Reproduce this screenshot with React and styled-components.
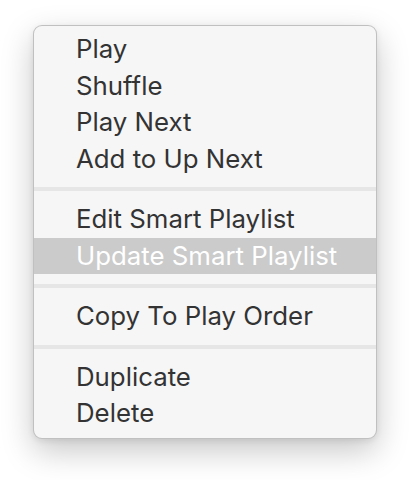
import React from 'react'
import styled, { createGlobalStyle } from 'styled-components'

const GlobalStyle = createGlobalStyle`
    html, body {
        margin: 0;
        padding: 0;
        background: #ffffff;
    }
    body {
        font-family: Inter, "Helvetica Neue", "Liberation Sans", Arial, sans-serif;
        -webkit-font-smoothing: antialiased;
    }
`

const Page = styled.div`
    width: 410px;
    height: 480px;
    padding: 25px 0 0 33px;
    box-sizing: border-box;
`

const Menu = styled.ul`
    list-style: none;
    margin: 0;
    width: 344px;
    box-sizing: border-box;
    padding: 5px 0 6px;
    background: #f6f6f6;
    border: 1px solid rgba(0, 0, 0, 0.22);
    border-radius: 9px;
    box-shadow: 0 12px 32px rgba(0, 0, 0, 0.22), 0 2px 6px rgba(0, 0, 0, 0.08);
`

const Item = styled.li`
    height: 36.5px;
    line-height: 35px;
    padding-left: 42px;
    font-size: 25.8px;
    color: ${(p) => (p.active ? '#ffffff' : '#333333')};
    background: ${(p) => (p.active ? '#cbcbcb' : 'transparent')};
    white-space: nowrap;
    cursor: default;
`

const Separator = styled.li`
    height: 4px;
    margin: 10px 0;
    background: #e6e6e6;
`

const groups = [
    ['Play', 'Shuffle', 'Play Next', 'Add to Up Next'],
    ['Edit Smart Playlist', 'Update Smart Playlist'],
    ['Copy To Play Order'],
    ['Duplicate', 'Delete'],
]

const App = () => {
    const active = 'Update Smart Playlist'
    return (
        <>
            <GlobalStyle />
            <Page>
                <Menu>
                    {groups.map((group, i) => (
                        <React.Fragment key={i}>
                            {i > 0 && <Separator />}
                            {group.map((label) => (
                                <Item key={label} active={label === active}>
                                    {label}
                                </Item>
                            ))}
                        </React.Fragment>
                    ))}
                </Menu>
            </Page>
        </>
    )
}

export default App
